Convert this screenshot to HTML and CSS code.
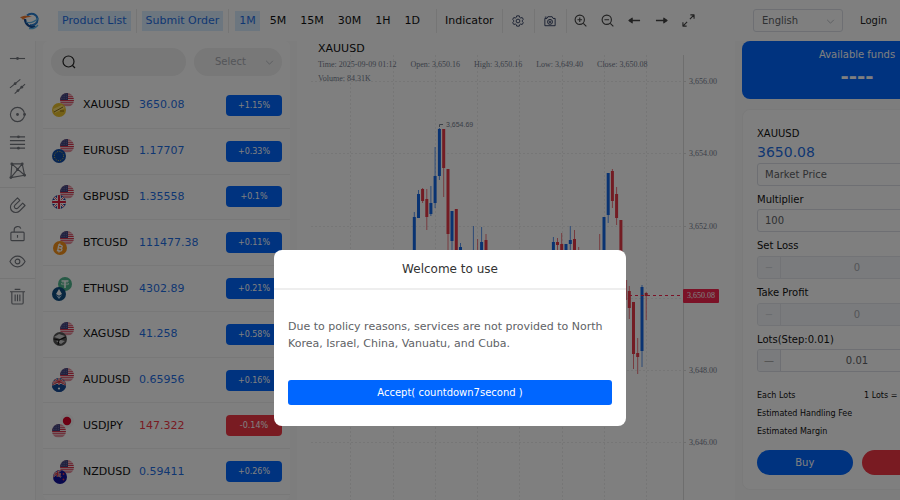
FILE: index.html
```html
<!DOCTYPE html>
<html lang="en">
<head>
<meta charset="utf-8">
<meta name="viewport" content="width=device-width, initial-scale=1">
<title>XAUUSD 3650.08</title>
<link rel="stylesheet" href="styles.css">
</head>
<body>
<svg class="defs" aria-hidden="true">
  <defs>
    <clipPath id="disc"><circle cx="7" cy="7" r="7"/></clipPath>
    <symbol id="us" viewBox="0 0 14 14"><g clip-path="url(#disc)"><path fill="#f2e9ec" d="M0 0h14v14H0z"/><path stroke="#d8354c" stroke-width="1.1" d="M0 1h14M0 3.2h14M0 5.4h14M0 7.6h14M0 9.8h14M0 12h14"/><path fill="#42437f" d="M0 0h8v7H0z"/><path stroke="#9a9bc4" stroke-width=".6" stroke-dasharray=".7 1" d="M1 1.8h6M1 3.6h6M1 5.4h6"/></g></symbol>
    <symbol id="gold" viewBox="0 0 14 14"><circle cx="7" cy="7" r="7" fill="#e8c02c"/><path fill="#f8df77" d="M1 6 10 2l3 3L3 10z"/><path stroke="#8a6a10" fill="none" d="m2 9 9-5M8 8l4 0"/></symbol>
    <symbol id="eu" viewBox="0 0 14 14"><circle cx="7" cy="7" r="7" fill="#0e4aa5"/><circle cx="7" cy="7" r="4.6" fill="none" stroke="#e9c93e" stroke-dasharray="1 1.4"/></symbol>
    <symbol id="gb" viewBox="0 0 14 14"><g clip-path="url(#disc)"><path fill="#1c3c98" d="M0 0h14v14H0z"/><path stroke="#fff" stroke-width="2.4" d="m0 0 14 14M14 0 0 14"/><path stroke="#dc1f3c" stroke-width=".8" d="m0 0 14 14M14 0 0 14"/><path stroke="#fff" stroke-width="4" d="M7 0v14M0 7h14"/><path stroke="#dc1f3c" stroke-width="2.2" d="M7 0v14M0 7h14"/></g></symbol>
    <symbol id="btc" viewBox="0 0 14 14"><circle cx="7" cy="7" r="7" fill="#f7931a"/><path fill="none" stroke="#fff" stroke-width="1.3" d="m5.800 3.500-1.200 6.800M5 4l2.800.4c2.200.4 1.700 2.700-.7 2.500l-1.600-.2 1.800.3c2.600.5 1.900 3.300-.6 3l-2.900-.4M7 2.500 6.700 4M6 10l-.3 1.500"/></symbol>
    <symbol id="usdt" viewBox="0 0 14 14"><circle cx="7" cy="7" r="7" fill="#4eb58c"/><path fill="none" stroke="#fff" stroke-width="1.500" d="M3.500 4h7M7 4v7"/><ellipse cx="7" cy="6.800" rx="4" ry="1" fill="none" stroke="#fff" stroke-width=".6"/></symbol>
    <symbol id="eth" viewBox="0 0 14 14"><circle cx="7" cy="7" r="7" fill="#0f4c81"/><path fill="#fff" d="m7 2 3 5-3 1.800L4 7z"/><path fill="#b9d4ee" d="m4 8 3 1.800L10 8l-3 4z"/></symbol>
    <symbol id="silver" viewBox="0 0 14 14"><circle cx="7" cy="7" r="7" fill="#555"/><path fill="#ccc" d="m1 5 5-3 6 2-5 3zM3 9l5-1 4 1-4 3z"/><path stroke="#111" fill="none" d="m1 7 5 1 7-3M6 8l-1 5"/></symbol>
    <symbol id="au" viewBox="0 0 14 14"><g clip-path="url(#disc)"><path fill="#174a94" d="M0 0h14v14H0z"/><path stroke="#eee" stroke-width="2" d="m0 0 14 7M14 0 0 7M7 0v7M0 4h14"/><path stroke="#d52b3d" stroke-width="1" d="m0 0 14 7M14 0 0 7M7 0v7M0 4h14"/><path fill="#174a94" d="M0 7.500h14V14H0z"/><circle cx="7" cy="10.500" r="1.100" fill="#fff"/></g></symbol>
    <symbol id="nz" viewBox="0 0 14 14"><g clip-path="url(#disc)"><path fill="#10109a" d="M0 0h14v14H0z"/><path stroke="#ddd" stroke-width="1.600" d="m0 1 8 6M8 0 0 7M4.500 0v7M0 4h8"/><path stroke="#d52b3d" stroke-width=".8" d="m0 1 8 6M8 0 0 7M4.500 0v7M0 4h8"/><circle cx="10.500" cy="4" r=".9" fill="#e0364a"/><circle cx="10.500" cy="9.500" r=".9" fill="#e0364a"/></g></symbol>
    <symbol id="jp" viewBox="0 0 14 14"><circle cx="7" cy="7" r="7" fill="#f6f6f6"/><circle cx="7" cy="7" r="4.200" fill="#d80027"/></symbol>
  </defs>
</svg>

<div class="app">
  <header class="topbar">
    <svg class="logo" viewBox="0 0 20 18" aria-label="Logo" role="img"><path fill="none" stroke="#2a7fd0" stroke-width="2" d="M7 3.500c4-3.500 10-1.500 10.500 3.500.4 4-3.500 7-7.500 6"/><path fill="none" stroke="#124a96" stroke-width="2.200" d="M5 7c0 5 5 9.500 10.500 7.500"/><path fill="none" stroke="#59b3e8" stroke-width="1.300" d="M6 10c4 1.500 9-.5 12.500-4M9 16.500c4 .8 7-1 9-3.500"/><path fill="#ee7a30" d="M0 5.500c3-2 8-2.500 12-.5-4-.5-7 .5-9 3-.5-1.300-1.500-2-3-2.500"/></svg>
    <nav class="tools" aria-label="Chart tools">
      <button class="tool on">Product List</button>
      <span class="bar"></span>
      <button class="tool on">Submit Order</button>
      <span class="bar"></span>
      <div class="periods">
        <button class="tool on">1M</button><button class="tool">5M</button><button class="tool">15M</button><button class="tool">30M</button><button class="tool">1H</button><button class="tool">1D</button>
      </div>
      <span class="bar"></span>
      <button class="tool indicator">Indicator</button>
      <span class="bar"></span>
      <button class="icon-btn dark" aria-label="Settings"><svg viewBox="0 0 14 14"><path d="m5.500 1-.4 1.700-1.300.8-1.700-.6L.8 5.200 2 6.300v1.400L.8 8.800l1.300 2.300 1.700-.6 1.300.8.4 1.700h3l.4-1.700 1.300-.8 1.700.6 1.300-2.300L12 7.700V6.300l1.200-1.100-1.300-2.300-1.700.6-1.300-.8L8.500 1z"/><circle cx="7" cy="7" r="2.200"/></svg></button>
      <span class="bar"></span>
      <button class="icon-btn dark" aria-label="Snapshot"><svg viewBox="0 0 14 14"><path d="M1 4h2.500l1-2h5l1 2H13v8.500H1zM1 2.500h2"/><circle cx="7" cy="8" r="2.900"/><circle cx="7" cy="8" r="1"/></svg></button>
      <span class="bar"></span>
      <div class="zooms">
        <button class="icon-btn" aria-label="Zoom in"><svg viewBox="0 0 14 14"><circle cx="6.200" cy="6.200" r="5"/><path d="m10 10 3.300 3.300M6.200 3.700v5M3.700 6.200h5"/></svg></button>
        <button class="icon-btn" aria-label="Zoom out"><svg viewBox="0 0 14 14"><circle cx="6.200" cy="6.200" r="5"/><path d="m10 10 3.300 3.300M3.700 6.200h5"/></svg></button>
        <button class="icon-btn" aria-label="Move left"><svg viewBox="0 0 14 14"><path stroke-width="1.600" d="M1.500 7H13"/><path fill="currentColor" d="M4.500 4.500 1 7l3.500 2.500z"/></svg></button>
        <button class="icon-btn" aria-label="Move right"><svg viewBox="0 0 14 14"><path stroke-width="1.600" d="M1 7h11.500"/><path fill="currentColor" d="M9.500 4.500 13 7 9.500 9.500z"/></svg></button>
        <button class="icon-btn" aria-label="Full screen"><svg viewBox="0 0 14 14"><path d="M9 1h4v4M13 1 8.500 5.500M5 13H1V9M1 13l4.500-4.500"/></svg></button>
      </div>
    </nav>
    <div class="account">
      <label class="picker language"><select aria-label="Language"><option>English</option></select><svg viewBox="0 0 10 6"><path d="m1 1 4 4 4-4"/></svg></label>
      <a class="login" href="#login">Login</a>
    </div>
  </header>

  <main class="workspace">
    <aside class="rail">
      <button aria-label="Line"><svg viewBox="0 0 18 18"><path d="M1 9h16"/><circle class="dot" cx="9" cy="9" r="1.500"/></svg></button>
      <button aria-label="Parallel lines"><svg viewBox="0 0 18 18"><path d="M1 10.500 12 1.500M6 16.500 17 6.500"/><circle class="dot" cx="6.500" cy="6" r="1.500"/><circle class="dot" cx="9.500" cy="13.300" r="1.500"/><circle class="dot" cx="13.500" cy="9.700" r="1.500"/></svg></button>
      <button aria-label="Circle"><svg viewBox="0 0 18 18"><circle cx="9" cy="9" r="7.500"/><circle class="dot" cx="9" cy="9" r="1.500"/><circle class="dot" cx="16.500" cy="9" r="1.500"/></svg></button>
      <button aria-label="Fibonacci"><svg viewBox="0 0 18 18"><path d="M1 3h16M1 7h16M1 11h16M1 15h16"/><circle class="dot" cx="10" cy="3" r="1.500"/><circle class="dot" cx="10" cy="15" r="1.500"/></svg></button>
      <button aria-label="Pattern"><svg viewBox="0 0 18 18"><path d="M3 2h11l2.500 12L2 16.500zM3 2l13.500 12M14 2 2 16.500"/><circle class="dot" cx="3" cy="2" r="1.500"/><circle class="dot" cx="14" cy="2" r="1.500"/><circle class="dot" cx="16.500" cy="14" r="1.500"/><circle class="dot" cx="2" cy="16.500" r="1.500"/><circle class="dot" cx="9" cy="8" r="1.500"/></svg></button>
      <hr>
      <button aria-label="Magnet"><svg viewBox="0 0 18 18"><path d="M9 1 3.200 6.800a5.650 5.650 0 0 0 8 8L17 9l-2.500-2.500-5.200 5.200a2.120 2.120 0 0 1-3-3L11.500 3.500z"/></svg></button>
      <button aria-label="Lock"><svg viewBox="0 0 18 18"><rect x="2" y="7.500" width="14" height="9" rx="1"/><path d="M5.500 7.500V5c0-4 6-4.500 7-1.200M9 10.500v3"/></svg></button>
      <button aria-label="Visibility"><svg viewBox="0 0 18 18"><path d="M1 9c4-7.500 12-7.500 16 0-4 7.500-12 7.500-16 0z"/><circle cx="9" cy="9" r="2.500"/></svg></button>
      <hr>
      <button aria-label="Delete"><svg viewBox="0 0 18 18"><path d="M1 4h16M6 1.500h6M3 4v11.500c0 1 .5 1.500 1.500 1.500h9c1 0 1.500-.5 1.500-1.500V4M6.500 7v7M9 7v7M11.500 7v7"/></svg></button>
    </aside>

    <section class="card products">
      <div class="filters">
        <label class="search"><svg viewBox="0 0 14 14"><circle cx="6.500" cy="6.500" r="5.500"/><path d="m10.500 10.500 2.500 2.500"/></svg><input type="search" aria-label="Search products"></label>
        <label class="picker kind"><select aria-label="Category"><option>Select</option></select><svg viewBox="0 0 10 6"><path d="m1 1 4 4 4-4"/></svg></label>
      </div>
      <ul class="quotes">
        <li><svg class="pair" viewBox="0 0 24 26"><use href="#us" x="8" y="1" width="14" height="14"/><use href="#gold" x="0" y="11" width="14" height="14"/></svg><span>XAUUSD</span><span class="price">3650.08</span><b class="change">+1.15%</b></li>
        <li><svg class="pair" viewBox="0 0 24 26"><use href="#us" x="8" y="1" width="14" height="14"/><use href="#eu" x="0" y="11" width="14" height="14"/></svg><span>EURUSD</span><span class="price">1.17707</span><b class="change">+0.33%</b></li>
        <li><svg class="pair" viewBox="0 0 24 26"><use href="#us" x="8" y="1" width="14" height="14"/><use href="#gb" x="0" y="11" width="14" height="14"/></svg><span>GBPUSD</span><span class="price">1.35558</span><b class="change">+0.1%</b></li>
        <li><svg class="pair" viewBox="0 0 24 26"><use href="#us" x="8" y="1" width="14" height="14"/><use href="#btc" x="1" y="11" width="14" height="14"/></svg><span>BTCUSD</span><span class="price">111477.38</span><b class="change">+0.11%</b></li>
        <li><svg class="pair" viewBox="0 0 24 26"><use href="#usdt" x="6" y="1" width="14" height="14"/><use href="#eth" x="0" y="11" width="14" height="14"/></svg><span>ETHUSD</span><span class="price">4302.89</span><b class="change">+0.21%</b></li>
        <li><svg class="pair" viewBox="0 0 24 26"><use href="#us" x="8" y="1" width="14" height="14"/><use href="#silver" x="1" y="11" width="14" height="14"/></svg><span>XAGUSD</span><span class="price">41.258</span><b class="change">+0.58%</b></li>
        <li><svg class="pair" viewBox="0 0 24 26"><use href="#us" x="8" y="1" width="14" height="14"/><use href="#au" x="0" y="11" width="14" height="14"/></svg><span>AUDUSD</span><span class="price">0.65956</span><b class="change">+0.16%</b></li>
        <li class="down"><svg class="pair" viewBox="0 0 24 26"><use href="#jp" x="8" y="1" width="14" height="14"/><use href="#us" x="0" y="11" width="14" height="14"/></svg><span>USDJPY</span><span class="price">147.322</span><b class="change">-0.14%</b></li>
        <li><svg class="pair" viewBox="0 0 24 26"><use href="#us" x="8" y="1" width="14" height="14"/><use href="#nz" x="1" y="11" width="14" height="14"/></svg><span>NZDUSD</span><span class="price">0.59411</span><b class="change">+0.26%</b></li>
      </ul>
    </section>

    <section class="card chart">
      <svg class="plot" viewBox="297 41 438 459" preserveAspectRatio="xMinYMin slice" role="img" aria-label="XAUUSD one minute candles">
        <path class="grid" d="M350.500 55V500M393.500 55V500M435.500 55V500M477.500 55V500M519.500 55V500M562.500 55V500M604.500 55V500M646.500 55V500M311 81.500H683M311 153.500H683M311 226.500H683M311 298.500H683M311 370.500H683M311 442.500H683"/>
        <path class="axis" d="M683.500 55V500M683 81.500h3M683 153.500h3M683 226.500h3M683 370.500h3M683 442.500h3"/>
        <path class="wick rise" d="M414.300 212V260M418.500 190V218M430.900 186V216M435.100 147V208M439.400 128V180M452 211V260M460.500 243V260M473.400 226V260M481.600 227V260M553.400 237V260M570.300 226V260M608.200 173V223M642 285V367"/>
        <path class="wick fall" d="M422.600 188V203M426.800 189V230M443.700 129V197M448 169V260M477.600 239V260M486 234V260M557.500 238V260M561.700 233V260M574.500 230V260M578.700 247V260M599.700 234V260M612.400 169V208M616.600 187V225M626.600 280V300M629.300 286V319M633.500 302V369M637.700 338V374M646.200 292V320"/>
        <path class="body rise" d="M414.300 217V260M418.500 194V218M430.900 203V214M435.100 176V203M439.400 129V176M452 211V241M460.500 247V260M481.600 242V260M553.400 242V260M566 244V260M570.300 240V244M604 217V260M608.200 173V215M642 287V351"/>
        <path class="body fall" d="M422.600 189V201M426.800 199V217M443.700 129V168M448 169V234M456.300 209V260M486 240V260M557.500 242V245M561.700 244V260M574.500 239V260M612.400 171V201M616.600 194V218M620.900 220V260M629.300 291V308M633.500 302V354M637.700 353V357M646.200 293V296"/>
        <path class="last" d="M311 295.500H683"/>
        <path class="peak" d="M439.500 127v-2.500h3.500"/>
        <text class="note" x="446" y="127">3,654.69</text>
        <g class="ticks"><text x="689" y="84">3,656.00</text><text x="689" y="156">3,654.00</text><text x="689" y="229">3,652.00</text><text x="689" y="373">3,648.00</text><text x="689" y="445">3,646.00</text></g>
        <rect class="flag" x="683" y="289" width="36" height="14" rx="1"/>
        <text class="flag-text" x="687" y="298">3,650.08</text>
      </svg>
      <div class="legend">
        <h1>XAUUSD</h1>
        <p><span>Time: 2025-09-09 01:12</span><span>Open: 3,650.16</span><span>High: 3,650.16</span><span>Low: 3,649.40</span><span>Close: 3,650.08</span></p>
        <p><span>Volume: 84.31K</span></p>
      </div>
    </section>

    <aside class="side">
      <section class="funds"><h2>Available funds</h2><strong>----</strong></section>
      <form class="card order">
        <div class="symbol">XAUUSD</div>
        <div class="quote">3650.08</div>
        <select class="field" aria-label="Order type"><option>Market Price</option></select>
        <label for="multiplier">Multiplier</label>
        <select class="field" id="multiplier"><option>100</option></select>
        <label for="loss">Set Loss</label>
        <div class="stepper off"><button type="button" disabled aria-label="Decrease loss">−</button><input id="loss" value="0" disabled></div>
        <label for="profit">Take Profit</label>
        <div class="stepper off"><button type="button" disabled aria-label="Decrease profit">−</button><input id="profit" value="0" disabled></div>
        <label for="lots">Lots(Step:0.01)</label>
        <div class="stepper"><button type="button" aria-label="Decrease lots">—</button><input id="lots" value="0.01"></div>
        <dl>
          <div><dt>Each Lots</dt><dd>1 Lots =</dd></div>
          <div><dt>Estimated Handling Fee</dt></div>
          <div><dt>Estimated Margin</dt></div>
        </dl>
        <div class="actions"><button type="button" class="buy">Buy</button><button type="button" class="sell" aria-label="Sell"></button></div>
      </form>
    </aside>
  </main>
</div>

<div class="overlay">
  <section class="dialog" role="dialog" aria-modal="true" aria-labelledby="welcome">
    <h2 id="welcome">Welcome to use</h2>
    <div class="dialog-body">
      <p>Due to policy reasons, services are not provided to North Korea, Israel, China, Vanuatu, and Cuba.</p>
      <button class="accept">Accept( countdown7second )</button>
    </div>
  </section>
</div>
</body>
</html>
```
FILE: styles.css
```css
:root {
  --blue: #0066ff;
  --red: #f23645;
  --line: #ebebeb;
  --muted: #606266;
}

* { box-sizing: border-box; }

body {
  margin: 0;
  overflow: hidden;
  background: #fafafa;
  color: #111;
  font: 10px/14px "DejaVu Sans", sans-serif;
}

h1, h2, p, ul, dl, dd { margin: 0; padding: 0; font-weight: 400; }

button, input, select {
  margin: 0;
  padding: 0;
  border: 0;
  background: none;
  color: inherit;
  font: inherit;
}

select { appearance: none; }

svg { display: block; fill: none; stroke-linejoin: round; }

.defs { position: absolute; width: 0; height: 0; }

.app { display: flex; flex-direction: column; height: 100vh; overflow: hidden; }

/* Top bar */
.topbar {
  display: flex;
  align-items: center;
  flex: none;
  height: 41px;
  padding: 0 13px 0 20px;
  background: #fff;
}

.logo { width: 20px; height: 18px; margin-right: 18px; }

.tools { display: flex; align-items: center; font-size: 11px; }

.tool { height: 20px; padding: 0 4px; white-space: nowrap; }

.on { background: #d9ecff; color: #1f6fe5; }

.bar { width: 1px; height: 24px; margin: 0 5px; background: var(--line); }

.periods { display: flex; gap: 6px; margin: 0 7px 0 1px; }

.indicator { padding: 0 3px; }

.icon-btn {
  display: grid;
  place-items: center;
  width: 21px;
  height: 20px;
  color: #444;
}

.icon-btn svg { width: 13px; height: 13px; stroke: currentColor; stroke-width: 1.2; }

.icon-btn.dark { color: #1d2b52; }

.icon-btn.dark svg { width: 12px; height: 12px; stroke-width: 1; }

.zooms { display: flex; gap: 6px; margin-left: -2px; }

.account { display: flex; align-items: center; gap: 17px; margin-left: auto; }

.picker { position: relative; display: block; }

.picker select { width: 100%; height: 100%; }

.picker svg {
  position: absolute;
  top: calc(50% - 2px);
  right: 8px;
  width: 9px;
  height: 5px;
  stroke: #b0b3ba;
  pointer-events: none;
}

.language { width: 90px; height: 23px; }

.language select {
  padding-left: 8px;
  border: 1px solid #dcdfe6;
  border-radius: 3px;
  color: var(--muted);
}

.login { color: #222; text-decoration: none; }

/* Columns */
.workspace {
  display: grid;
  grid-template-columns: 36px 247px minmax(438px, 1fr) 230px;
  grid-template-rows: minmax(0, 1fr);
  column-gap: 7px;
  flex: 1;
  min-height: 0;
}

.card { background: #fff; }

.rail {
  padding-top: 3px;
  border-right: 1px solid #f0f0f0;
  background: #fff;
}

.rail button { display: grid; place-items: center; width: 100%; height: 28px; }

.rail svg { width: 17px; height: 17px; stroke: #75787f; stroke-width: 1.2; }

.rail .dot { fill: #75787f; stroke: none; }

.rail hr { height: 1px; margin: 3px 0; border: 0; background: var(--line); }

/* Product list */
.products { display: flex; flex-direction: column; padding-bottom: 5px; border-radius: 6px; }

.filters { display: flex; gap: 8px; padding: 7px 8px 7px 8px; }

.search, .kind { height: 28px; border-radius: 14px; background: #f0f0f0; }

.search { display: flex; align-items: center; flex: 1; gap: 6px; padding: 0 11px; }

.search svg { flex: none; width: 14px; height: 14px; stroke: #222; stroke-width: 1.2; }

.search input { width: 100%; min-width: 0; }

.kind { width: 88px; }

.kind select { padding-left: 21px; color: #a8abb2; }

.quotes { display: flex; flex: 1; flex-direction: column; list-style: none; }

.quotes li {
  display: grid;
  grid-template-columns: 31px 56px 1fr 56px;
  align-items: center;
  flex: 1;
  padding: 0 8px 0 9px;
  border-bottom: 1px solid #f0f0f0;
  font-size: 11px;
}

.pair { width: 24px; height: 26px; }

.price { color: #1f6fe5; }

.change {
  border-radius: 4px;
  background: var(--blue);
  color: #fff;
  font-size: 8px;
  font-weight: 400;
  line-height: 21px;
  text-align: center;
}

.down .price { color: var(--red); }

.down .change { background: var(--red); }

/* Chart */
.chart { display: grid; min-height: 0; overflow: hidden; }

.plot, .legend { grid-area: 1 / 1; }

.plot { width: 100%; height: 100%; min-height: 0; }

.legend { padding-left: 21px; color: #76808f; font: 8px/14px "Liberation Serif", serif; }

.legend h1 { margin-bottom: 1px; color: #111; font: 11px/16px "DejaVu Sans", sans-serif; }

.legend p { display: flex; gap: 14px; white-space: nowrap; }

.grid { stroke: #ededed; stroke-dasharray: 2 2; }

.axis { stroke: #ddd; }

.wick { stroke-width: 1; opacity: .7; }

.body { stroke-width: 3; }

.rise { stroke: #1266e4; }

.fall { stroke: #e63946; }

.last { stroke: #f6244f; stroke-dasharray: 3 3; }

.peak { stroke: #76808f; }

.note { fill: #76808f; font: 7px "Liberation Sans", sans-serif; }

.ticks { fill: #76808f; font: 8px "Liberation Serif", serif; }

.flag { fill: #f6244f; }

.flag-text { fill: #fff; font: 8px "Liberation Serif", serif; }

/* Order panel */
.side { display: flex; flex-direction: column; gap: 10px; }

.funds {
  height: 58px;
  padding-top: 7px;
  border-radius: 8px;
  background: var(--blue);
  color: #fff;
  text-align: center;
}

.funds h2 { font-size: 10px; }

.funds strong { display: block; font-size: 20px; line-height: 28px; }

.order {
  display: flex;
  flex-direction: column;
  padding: 16px 14px 14px;
  border: 1px solid #f5f5f5;
  border-radius: 8px;
}

.symbol { line-height: 16px; }

.quote { color: #1f6fe5; font-size: 14px; line-height: 21px; }

.field, .stepper {
  height: 23px;
  border: 1px solid #dcdfe6;
  border-radius: 3px;
  color: var(--muted);
}

.field { padding-left: 7px; }

.order label { padding: 7px 0 2px; }

.stepper { display: flex; overflow: hidden; }

.stepper button { width: 23px; border-right: 1px solid #dcdfe6; background: #f5f7fa; color: #999; }

.stepper input { flex: 1; min-width: 0; text-align: center; padding-right: 23px; }

.off { margin-top: 1px; border-color: #e4e7ed; background: #f5f7fa; color: #a8abb2; }

.off button { border-color: #e4e7ed; color: #d0d3d9; }

.order dl { padding: 15px 0 9px; font-size: 8px; line-height: 18px; }

.order dl div { display: grid; grid-template-columns: 107px 1fr; }

.actions { display: grid; grid-template-columns: 1fr 1fr; gap: 9px; }

.actions button { height: 25px; border-radius: 13px; color: #fff; }

.buy { background: var(--blue); }

.sell { background: var(--red); }

/* Welcome dialog */
.overlay {
  position: fixed;
  inset: 0;
  display: flex;
  align-items: flex-start;
  justify-content: center;
  padding-top: 50vh;
  background: rgba(0, 0, 0, .5);
}

.dialog { width: 352px; border-radius: 8px; background: #fff; }

.dialog h2 {
  border-bottom: 2px solid #eee;
  color: #333;
  font-size: 12px;
  line-height: 38px;
  text-align: center;
}

.dialog-body { padding: 28px 14px 21px; }

.dialog p { margin-bottom: 28px; color: var(--muted); font-size: 11px; line-height: 17px; }

.accept {
  display: block;
  width: 100%;
  height: 25px;
  border-radius: 3px;
  background: var(--blue);
  color: #fff;
}
```
